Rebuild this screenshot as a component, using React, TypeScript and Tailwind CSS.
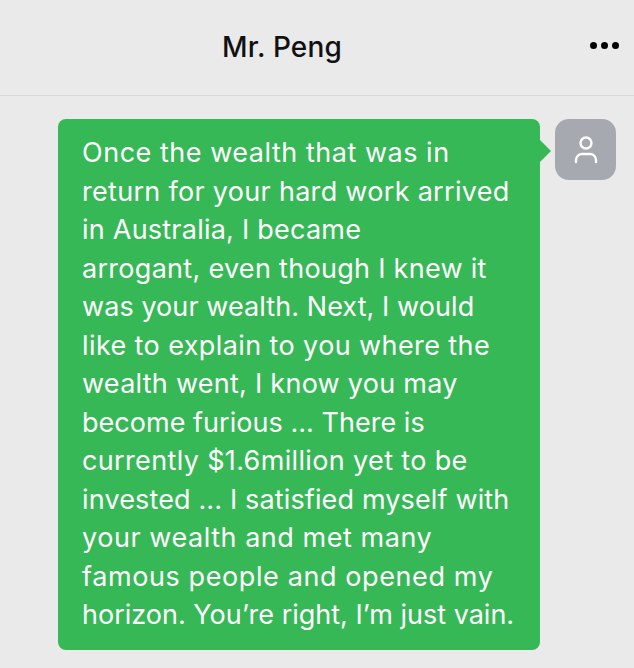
import React from 'react';

// tracking per line keeps the wrap widths of the original font
const lines = [
  { text: 'Once the wealth that was in', cls: 'tracking-[0.52px]' },
  { text: 'return for your hard work arrived', cls: 'tracking-[0.3px]' },
  { text: 'in Australia, I became', cls: 'tracking-[0.23px]' },
  { text: 'arrogant, even though I knew it', cls: 'tracking-[0.29px]' },
  { text: 'was your wealth. Next, I would', cls: 'tracking-[0.07px]' },
  { text: 'like to explain to you where the', cls: 'tracking-[0.4px]' },
  { text: 'wealth went, I know you may', cls: 'tracking-[0.26px]' },
  { text: 'become furious ... There is', cls: 'tracking-[0.03px]' },
  { text: 'currently $1.6million yet to be', cls: 'tracking-[0.35px]' },
  { text: 'invested ... I satisfied myself with', cls: 'tracking-[0.14px]' },
  { text: 'your wealth and met many', cls: 'tracking-[0.54px]' },
  { text: 'famous people and opened my', cls: 'tracking-[0.6px]' },
  { text: 'horizon. You’re right, I’m just vain.', cls: 'tracking-[0px]' },
];

const App: React.FC = () => {
  return (
    <div className="w-[634px] h-[668px] overflow-hidden bg-[#eaeaeb] font-['Inter',sans-serif]">
      <header className="h-[96px] flex items-center justify-between pl-[222px] pr-[15px] border-b border-[#d9d9d9]">
        <h1 className="text-[28px] font-medium text-[#111] tracking-[0.15px] -mt-[2px]">Mr. Peng</h1>
        <div className="flex gap-[4px] -mt-[4px]">
          <span className="w-[7px] h-[7px] rounded-full bg-black"></span>
          <span className="w-[7px] h-[7px] rounded-full bg-black"></span>
          <span className="w-[7px] h-[7px] rounded-full bg-black"></span>
        </div>
      </header>

      <main className="flex items-start gap-[15px] pl-[58px] pt-[23px]">
        <div className="relative w-[482px] h-[531px] bg-[#36b856] rounded-[8px] pl-[24px] pt-[15px] text-white text-[27px] leading-[38.5px] whitespace-nowrap">
          {lines.map((line) => (
            <div key={line.text} className={line.cls}>{line.text}</div>
          ))}
          <div className="absolute left-full top-[21px] w-0 h-0 border-y-[11px] border-y-transparent border-l-[11px] border-l-[#36b856]"></div>
        </div>

        <div className="w-[61px] h-[61px] rounded-[14px] bg-[#a7a9b0] flex items-center justify-center">
          <svg width="26" height="30" viewBox="0 0 26 30" fill="none" stroke="#fff" strokeWidth="2.4" strokeLinecap="round">
            <circle cx="13" cy="8" r="5.5" />
            <path d="M3 27 v-2 a6 6 0 0 1 6 -6 h8 a6 6 0 0 1 6 6 v2" />
          </svg>
        </div>
      </main>
    </div>
  );
};

export default App;
